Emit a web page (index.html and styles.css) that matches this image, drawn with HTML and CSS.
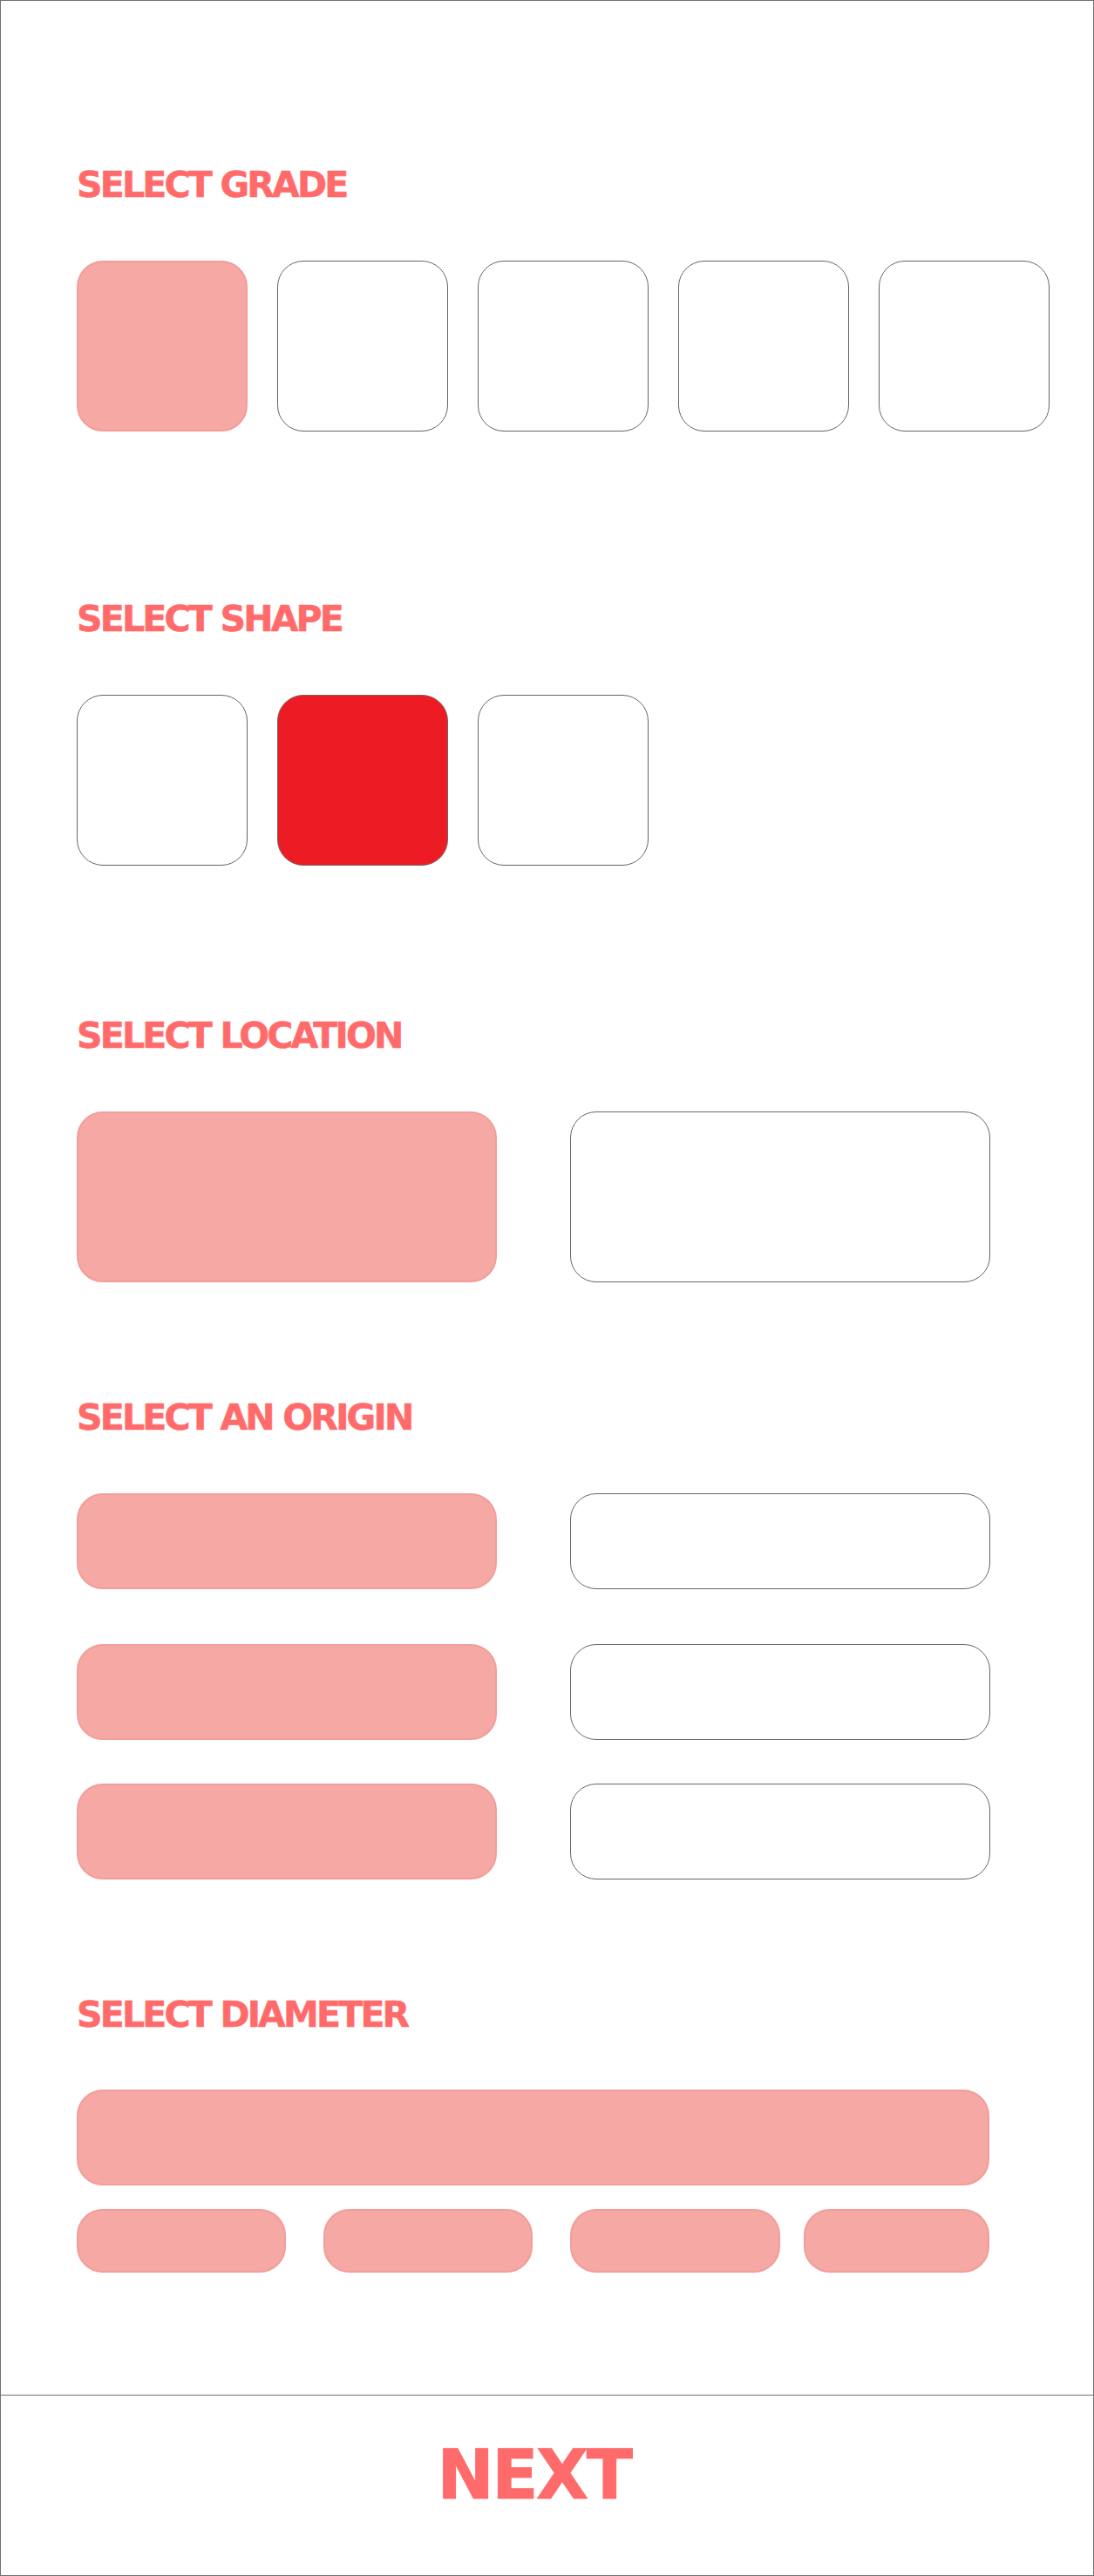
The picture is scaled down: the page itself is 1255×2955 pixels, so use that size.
FILE: index.html
```html
<!DOCTYPE html>
<html lang="en">
<head>
<meta charset="utf-8">
<title>Select options</title>
<link rel="stylesheet" href="styles.css">
</head>
<body>
<div class="page">
  <main class="main">
    <section class="section sec-grade">
      <h2 class="title">SELECT GRADE</h2>
      <div class="row row-squares">
        <div class="opt sq pink"></div>
        <div class="opt sq"></div>
        <div class="opt sq"></div>
        <div class="opt sq"></div>
        <div class="opt sq"></div>
      </div>
    </section>
    <section class="section sec-shape">
      <h2 class="title">SELECT SHAPE</h2>
      <div class="row row-squares">
        <div class="opt sq"></div>
        <div class="opt sq red"></div>
        <div class="opt sq"></div>
      </div>
    </section>
    <section class="section sec-location">
      <h2 class="title">SELECT LOCATION</h2>
      <div class="row row-halves">
        <div class="opt half tall pink"></div>
        <div class="opt half tall"></div>
      </div>
    </section>
    <section class="section sec-origin">
      <h2 class="title">SELECT AN ORIGIN</h2>
      <div class="row row-halves">
        <div class="opt half pink"></div>
        <div class="opt half"></div>
      </div>
      <div class="row row-halves gap2">
        <div class="opt half pink"></div>
        <div class="opt half"></div>
      </div>
      <div class="row row-halves gap3">
        <div class="opt half pink"></div>
        <div class="opt half"></div>
      </div>
    </section>
    <section class="section sec-diameter">
      <h2 class="title">SELECT DIAMETER</h2>
      <div class="opt wide pink"></div>
      <div class="row row-pills">
        <div class="opt pill pink p1"></div>
        <div class="opt pill pink p2"></div>
        <div class="opt pill pink p3"></div>
        <div class="opt pill pink p4"></div>
      </div>
    </section>
  </main>
  <footer class="footer">
    <span class="next">NEXT</span>
  </footer>
</div>
</body>
</html>
```

FILE: styles.css
```css
* { box-sizing: border-box; }
html, body { margin: 0; padding: 0; background: #ffffff; }
.page {
  width: 1255px;
  height: 2955px;
  border: 1px solid #707070;
  display: flex;
  flex-direction: column;
  font-family: "DejaVu Sans", "Liberation Sans", sans-serif;
}
.main {
  height: 2746px;
  padding: 191px 0 0 87px;
}
.title {
  margin: 0;
  font-size: 41px;
  line-height: 41px;
  height: 41px;
  font-weight: 700;
  color: #ff6b6b;
  letter-spacing: -2.8px;
  -webkit-text-stroke: 0.6px #ff6b6b;
  white-space: nowrap;
}
.row { display: flex; }
.row-squares { gap: 34px; margin-top: 66px; }
.row-halves { gap: 84px; margin-top: 66px; }
.row-halves.gap2 { margin-top: 63px; }
.row-halves.gap3 { margin-top: 50px; }
.sec-shape { margin-top: 195px; }
.sec-location { margin-top: 175px; }
.sec-origin { margin-top: 135px; }
.sec-diameter { margin-top: 135px; }

.opt {
  border: 1px solid #666666;
  background: #ffffff;
  border-radius: 30px;
  flex: none;
}
.opt.pink {
  background: #f6a8a5;
  border: 2px solid #f29d99;
}
.opt.red {
  background: #ed1c24;
  border-color: #7a6060;
}
.sq { width: 196px; height: 196px; }
.half { width: 482px; height: 110px; }
.half.tall { height: 196px; }
.wide { width: 1047px; height: 110px; margin-top: 65px; }
.row-pills { margin-top: 27px; }
.pill { height: 73px; }
.p1 { width: 240px; }
.p2 { width: 240px; margin-left: 43px; }
.p3 { width: 241px; margin-left: 43px; }
.p4 { width: 213px; margin-left: 27px; }

.footer {
  border-top: 1px solid #707070;
  flex: 1;
  display: flex;
  justify-content: center;
  padding-top: 52px;
  padding-right: 30px;
}
.next {
  font-size: 78px;
  line-height: 78px;
  height: 78px;
  font-weight: 700;
  color: #ff6b6b;
  letter-spacing: -2.5px;
  -webkit-text-stroke: 1px #ff6b6b;
}
```
